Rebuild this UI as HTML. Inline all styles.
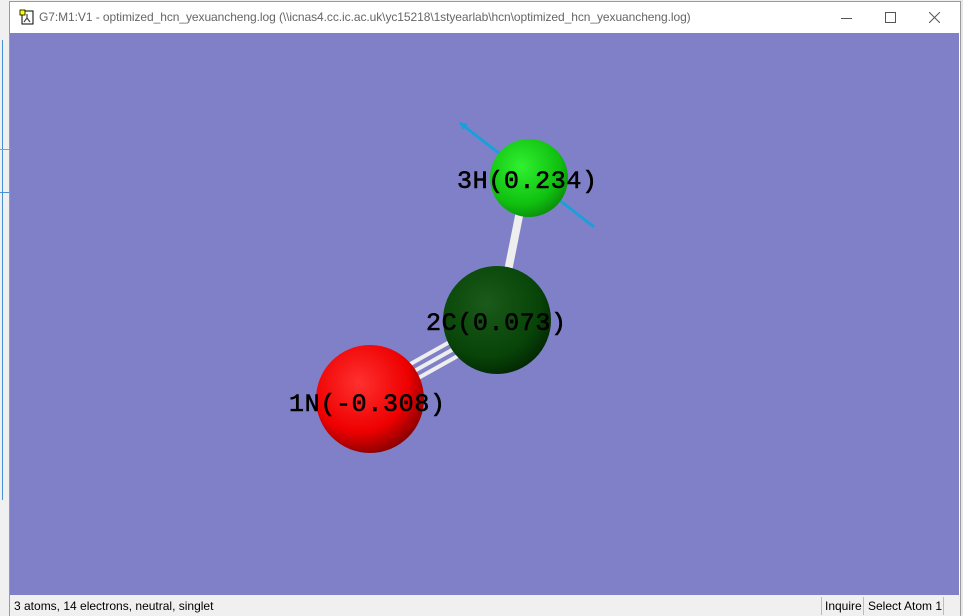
<!DOCTYPE html>
<html><head><style>
body{margin:0;width:963px;height:615px;overflow:hidden;background:#f0f0f0;position:relative;font-family:"Liberation Sans",sans-serif}
.bgl{position:absolute;left:0;top:0;width:10px;height:615px;background:#f0f0f0}
.win{position:absolute;left:9px;top:1px;width:950px;height:614px;background:#fff;border:1px solid #9a9a9a;border-bottom:none}
.title{position:absolute;left:0;top:0;width:950px;height:31px;background:#fff}
.title span{position:absolute;left:29px;top:8px;font-size:12px;color:#666;letter-spacing:-0.07px}
.view{position:absolute;left:0;top:31px;width:949px;height:562px;background:#8080c9}
.status{position:absolute;left:0;top:593px;width:950px;height:21px;background:#f0f0f0;font-size:12px;color:#000}
.mol{position:absolute;left:0;top:0}
</style></head><body>
<div class="bgl">
<div style="position:absolute;left:0;top:40px;width:2px;height:460px;border-right:1px solid #4a90d0"></div>
<div style="position:absolute;left:0;top:149px;width:9px;border-top:1px solid #999"></div>
<div style="position:absolute;left:0;top:192px;width:9px;border-top:1px solid #4a90d0"></div>
</div>
<div style="position:absolute;left:959px;top:0;width:4px;height:615px;background:#e8e8e8"></div>
<div class="win">
<div class="title">
<svg style="position:absolute;left:9px;top:7px" width="16" height="16" viewBox="0 0 16 16"><rect x="3" y="2" width="11" height="13" fill="#fff" stroke="#000"/><rect x="1" y="1" width="5" height="5" fill="#ff0" stroke="#000" stroke-width=".8"/><path d="M8 5v4M8 9l-3 4M8 9l3 4" stroke="#444" stroke-width="1.2"/></svg>
<span>G7:M1:V1 - optimized_hcn_yexuancheng.log (\\icnas4.cc.ic.ac.uk\yc15218\1styearlab\hcn\optimized_hcn_yexuancheng.log)</span>
<div style="position:absolute;left:831px;top:16px;width:11px;border-top:1px solid #555"></div>
<div style="position:absolute;left:875px;top:10px;width:9px;height:9px;border:1px solid #555"></div>
<svg style="position:absolute;left:919px;top:10px" width="11" height="11"><path d="M0 0L11 11M11 0L0 11" stroke="#555"/></svg>
</div>
<div class="view">
<svg class="mol" width="949" height="562" viewBox="10 32 949 562">
<defs>
<radialGradient id="gh" cx=".4" cy=".35" r=".7"><stop offset="0" stop-color="#30f030"/><stop offset=".7" stop-color="#10c010"/><stop offset="1" stop-color="#0a8a0a"/></radialGradient>
<radialGradient id="gc" cx=".4" cy=".35" r=".7"><stop offset="0" stop-color="#1a5a1a"/><stop offset=".7" stop-color="#084408"/><stop offset="1" stop-color="#022502"/></radialGradient>
<radialGradient id="gn" cx=".4" cy=".35" r=".7"><stop offset="0" stop-color="#ff3030"/><stop offset=".65" stop-color="#ee0000"/><stop offset="1" stop-color="#800000"/></radialGradient>
</defs>
<line x1="460" y1="122" x2="594" y2="226" stroke="#1aa0d8" stroke-width="3"/>
<path d="M459 121l9 2-5 6z" fill="#1aa0d8"/>
<line x1="521" y1="205" x2="508" y2="270" stroke="#eee" stroke-width="8"/>
<g stroke="#eee" stroke-width="4"><line x1="405" y1="366" x2="455" y2="338"/><line x1="409" y1="373" x2="459" y2="345"/><line x1="413" y1="380" x2="463" y2="352"/></g>
<circle cx="529" cy="177" r="39" fill="url(#gh)"/>
<circle cx="497" cy="319" r="54" fill="url(#gc)"/>
<circle cx="370" cy="398" r="54" fill="url(#gn)"/>
<g font-family="Liberation Mono,monospace" font-size="25" fill="#000" stroke="#000" stroke-width=".6">
<text x="457" y="187" textLength="140">3H(0.234)</text>
<text x="426" y="329" textLength="140">2C(0.073)</text>
<text x="289" y="410" textLength="156">1N(-0.308)</text>
</g>
</svg>
</div>
<div class="status">
<span style="position:absolute;left:4px;top:4px">3 atoms, 14 electrons, neutral, singlet</span>
<div style="position:absolute;left:811px;top:2px;height:18px;border-left:1px solid #bbb"></div>
<span style="position:absolute;left:815px;top:4px">Inquire</span>
<div style="position:absolute;left:853px;top:2px;height:18px;border-left:1px solid #bbb"></div>
<span style="position:absolute;left:858px;top:4px">Select Atom 1</span>
<div style="position:absolute;left:933px;top:2px;height:18px;border-left:1px solid #bbb"></div>
</div>
</div>
</body></html>
